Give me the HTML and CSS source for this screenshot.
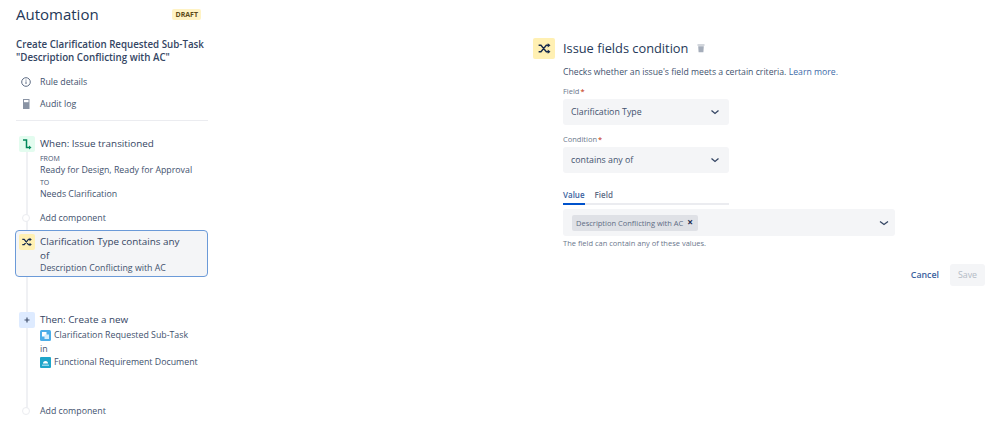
FILE: index.html
```html
<!DOCTYPE html>
<html>
<head>
    <title>Automation</title>
    <meta charset="UTF-8">
    <link rel="stylesheet" href="styles.css">
</head>
<body>
    <div class="page">
        <div class="sidebar">
            <div class="sidebar-head">
                <h1>Automation</h1>
                <span class="draft">DRAFT</span>
            </div>
            <h2 class="rule-name">Create Clarification Requested Sub-Task<br>"Description Conflicting with AC"</h2>
            <div class="nav-item">
                <svg width="14" height="14" viewBox="0 0 14 14"><circle cx="7" cy="7" r="4.300" fill="none" stroke="#5e6c84" stroke-width="1"/><path d="M7 6.400v2.600M7 4.600v1" stroke="#5e6c84" stroke-width="1"/></svg>
                <span>Rule details</span>
            </div>
            <div class="nav-item">
                <svg width="14" height="14" viewBox="0 0 14 14"><rect x="4" y="2" width="6.500" height="10" fill="#8993a4"/><rect x="5" y="3" width="4.500" height="2.200" fill="#fff"/></svg>
                <span>Audit log</span>
            </div>
            <div class="divider"></div>

            <div class="flow">
                <div class="flow-line"></div>

                <div class="step step-when">
                    <div class="step-icon icon-green">
                        <svg width="14" height="14" viewBox="0 0 14 14"><path d="M3 3h3.500v7.500h3" fill="none" stroke="#00875a" stroke-width="1.500"/><path d="M9 8.500l2.500 2-2.500 2z" fill="#00875a"/></svg>
                    </div>
                    <div class="step-body">
                        <div class="step-title">When: Issue transitioned</div>
                        <div class="step-label label-from">FROM</div>
                        <div class="step-text">Ready for Design, Ready for Approval</div>
                        <div class="step-label">TO</div>
                        <div class="step-text">Needs Clarification</div>
                    </div>
                </div>

                <div class="add-row add-first">
                    <span class="add-dot"></span>
                    <span>Add component</span>
                </div>

                <div class="step step-selected">
                    <div class="step-icon icon-yellow">
                        <svg width="12" height="12" viewBox="0 0 14 14"><path d="M1.500 4h2.200l5 6h2M1.500 10h2.200l5-6h2" fill="none" stroke="#172b4d" stroke-width="1.400"/><path d="M10 2l2.600 2L10 6zM10 8l2.600 2L10 12z" fill="#172b4d"/></svg>
                    </div>
                    <div class="step-body">
                        <div class="step-title">Clarification Type contains any of</div>
                        <div class="step-text">Description Conflicting with AC</div>
                    </div>
                </div>

                <div class="step step-then">
                    <div class="step-icon icon-blue">
                        <svg width="14" height="14" viewBox="0 0 14 14"><path d="M7 4.500v5M4.500 7h5" stroke="#42526e" stroke-width="1.200"/></svg>
                    </div>
                    <div class="step-body">
                        <div class="step-title">Then: Create a new</div>
                        <div class="step-text with-icon">
                            <svg width="11" height="11" viewBox="0 0 11 11"><rect width="11" height="11" rx="1.500" fill="#4bade8"/><rect x="2" y="2" width="4.500" height="4.500" fill="#fff"/><rect x="4.500" y="4.500" width="4.500" height="4.500" fill="#d5eefc"/></svg>
                            Clarification Requested Sub-Task
                        </div>
                        <div class="step-text step-in">in</div>
                        <div class="step-text with-icon">
                            <svg width="11" height="11" viewBox="0 0 11 11"><rect width="11" height="11" rx="1" fill="#1fa5c9"/><path d="M3 6.500a2.500 2.500 0 0 1 5 0z" fill="#fff"/><rect x="2" y="7.500" width="7" height="1.500" fill="#8fd4ea"/></svg>
                            Functional Requirement Document
                        </div>
                    </div>
                </div>

                <div class="add-row add-last">
                    <span class="add-dot"></span>
                    <span>Add component</span>
                </div>
            </div>
        </div>

        <div class="panel">
            <div class="panel-head">
                <div class="panel-icon">
                    <svg width="15" height="15" viewBox="0 0 14 14"><path d="M1.500 4h2.200l5 6h2M1.500 10h2.200l5-6h2" fill="none" stroke="#172b4d" stroke-width="1.300"/><path d="M10 2l2.600 2L10 6zM10 8l2.600 2L10 12z" fill="#172b4d"/></svg>
                </div>
                <h3>Issue fields condition</h3>
                <svg class="trash" width="10" height="10" viewBox="0 0 10 10"><path d="M1.500 1.500h7v1h-7zM2.200 3.200h5.600l-.4 6H2.600z" fill="#a5adba"/></svg>
            </div>
            <div class="panel-body">
                <p class="desc">Checks whether an issue's field meets a certain criteria. <a>Learn more.</a></p>
                <div class="field-label">Field<span class="req">*</span></div>
                <div class="select">
                    <span>Clarification Type</span>
                    <svg width="12" height="12" viewBox="0 0 12 12"><path d="M2.500 4.500l3.500 3 3.500-3" fill="none" stroke="#344563" stroke-width="1.300"/></svg>
                </div>
                <div class="field-label label-condition">Condition<span class="req">*</span></div>
                <div class="select">
                    <span>contains any of</span>
                    <svg width="12" height="12" viewBox="0 0 12 12"><path d="M2.500 4.500l3.500 3 3.500-3" fill="none" stroke="#344563" stroke-width="1.300"/></svg>
                </div>
                <div class="tabs">
                    <span class="tab tab-active">Value</span>
                    <span class="tab">Field</span>
                </div>
                <div class="multi">
                    <span class="tag">Description Conflicting with AC <b>×</b></span>
                    <svg width="12" height="12" viewBox="0 0 12 12"><path d="M2 4.500l4 3 4-3" fill="none" stroke="#344563" stroke-width="1.300"/></svg>
                </div>
                <div class="help">The field can contain any of these values.</div>
            </div>
            <div class="actions">
                <span class="cancel">Cancel</span>
                <span class="save">Save</span>
            </div>
        </div>
    </div>
</body>
</html>
```

FILE: styles.css
```css
* {
    box-sizing: border-box;
}
body {
    margin: 0;
    background: #fff;
    color: #172b4d;
    font-family: "Open Sans", "Noto Sans", Arial, sans-serif;
    font-size: 10px;
    overflow: hidden;
}
.page {
    display: flex;
    height: 426px;
}
.sidebar {
    width: 209px;
    margin-left: 16px;
    flex-shrink: 0;
}
.sidebar-head {
    display: flex;
    align-items: center;
    justify-content: space-between;
    height: 18px;
    margin-top: 5px;
    padding-right: 24px;
}
h1 {
    margin: 0;
    font-size: 15px;
    font-weight: 400;
    color: #253858;
}
.draft {
    background: #fff3c4;
    color: #5e4b1a;
    font-size: 7px;
    font-weight: 700;
    padding: 1px 3px;
    border-radius: 2px;
}
.rule-name {
    margin: 15px 0 7px;
    font-size: 9.750px;
    line-height: 13px;
    font-weight: 600;
    color: #344563;
}
.nav-item {
    display: flex;
    align-items: center;
    gap: 7px;
    height: 22px;
    padding-left: 3px;
    color: #42526e;
    font-size: 8.800px;
}
.divider {
    height: 1px;
    background: #ebecf0;
    margin-top: 5px;
    width: 192px;
}
.flow {
    position: relative;
    margin-top: 15px;
}
.flow-line {
    position: absolute;
    left: 10px;
    top: 10px;
    width: 2px;
    height: 268px;
    background: #f0f1f4;
}
.step {
    position: relative;
    display: flex;
    gap: 5px;
    padding-left: 3px;
}
.step-icon {
    width: 16px;
    height: 16px;
    border-radius: 2px;
    display: flex;
    align-items: center;
    justify-content: center;
    flex-shrink: 0;
}
.icon-green {
    background: #e3fcef;
}
.icon-yellow {
    background: #fff0b3;
}
.icon-blue {
    background: #deebff;
}
.step-body {
    min-width: 0;
}
.step-title {
    font-size: 9.850px;
    line-height: 14px;
    color: #344563;
}
.step-label {
    font-size: 7px;
    line-height: 11px;
    color: #42526e;
}
.label-from {
    margin-top: 3px;
}
.step-text {
    font-size: 8.800px;
    line-height: 13px;
    color: #42526e;
}
.step-in {
    margin-top: 1px;
}
.with-icon {
    display: flex;
    align-items: center;
    gap: 3px;
}
.add-row {
    position: relative;
    display: flex;
    align-items: center;
    gap: 10px;
    height: 14px;
    padding-left: 6px;
    color: #42526e;
    font-size: 8.800px;
}
.add-dot {
    width: 8px;
    height: 8px;
    border: 1px solid #ebecf0;
    border-radius: 50%;
    background: #fff;
}
.add-first {
    margin-top: 10px;
}
.step-selected {
    width: 193px;
    height: 47px;
    margin: 5px 0 0 -1px;
    padding: 3px 26px 0 3px;
    background: #f4f5f7;
    border: 1px solid #6b9ad8;
    border-radius: 4px;
}
.step-then {
    margin-top: 35px;
}
.step-then .step-title {
    margin-bottom: 3px;
}
.add-last {
    margin-top: 35px;
}
.panel {
    margin-left: 308px;
    width: 452px;
    padding-top: 37px;
}
.panel-head {
    display: flex;
    align-items: center;
    height: 22px;
}
.panel-icon {
    width: 22px;
    height: 21px;
    border-radius: 2px;
    background: #fff0b3;
    display: flex;
    align-items: center;
    justify-content: center;
    margin-right: 8px;
}
h3 {
    margin: 0;
    font-size: 12.800px;
    font-weight: 400;
    color: #253858;
}
.trash {
    margin-left: 8px;
}
.panel-body {
    padding-left: 30px;
}
.desc {
    margin: 7px 0 0;
    font-size: 8.700px;
    line-height: 13px;
    color: #42526e;
}
.desc a {
    color: #3d6aa8;
}
.field-label {
    margin-top: 7px;
    font-size: 7.500px;
    line-height: 11px;
    color: #6b778c;
}
.req {
    margin-left: 1px;
    color: #bf2600;
}
.label-condition {
    margin-top: 9px;
}
.select {
    display: flex;
    align-items: center;
    justify-content: space-between;
    width: 166px;
    height: 26px;
    margin-top: 2px;
    padding: 0 8px;
    background: #f4f5f7;
    border-radius: 3px;
    font-size: 8.800px;
    color: #42526e;
}
.tabs {
    display: flex;
    gap: 10px;
    width: 166px;
    height: 16px;
    margin-top: 16px;
    border-bottom: 2px solid #ebecf0;
}
.tab {
    height: 16px;
    font-size: 8px;
    font-weight: 600;
    color: #5e6c84;
}
.tab-active {
    color: #3a5f9e;
    border-bottom: 2px solid #0052cc;
}
.multi {
    display: flex;
    align-items: center;
    justify-content: space-between;
    width: 332px;
    height: 27px;
    margin-top: 4px;
    padding: 0 5px 0 9px;
    background: #f4f5f7;
    border-radius: 3px;
}
.tag {
    height: 16px;
    line-height: 15px;
    background: #dfe1e6;
    border-radius: 2px;
    padding: 0 5px 0 4px;
    font-size: 7.500px;
    color: #5e6c84;
}
.tag b {
    margin-left: 2px;
    font-size: 10px;
    color: #172b4d;
}
.help {
    margin-top: 2px;
    font-size: 7.500px;
    line-height: 11px;
    color: #6b778c;
}
.actions {
    display: flex;
    align-items: center;
    justify-content: flex-end;
    gap: 11px;
    margin-top: 15px;
}
.cancel {
    font-size: 8.800px;
    font-weight: 600;
    color: #3a5f9e;
}
.save {
    display: flex;
    align-items: center;
    justify-content: center;
    width: 35px;
    height: 22px;
    background: #f4f5f7;
    border-radius: 3px;
    font-size: 8.800px;
    color: #b3bac5;
}
```
